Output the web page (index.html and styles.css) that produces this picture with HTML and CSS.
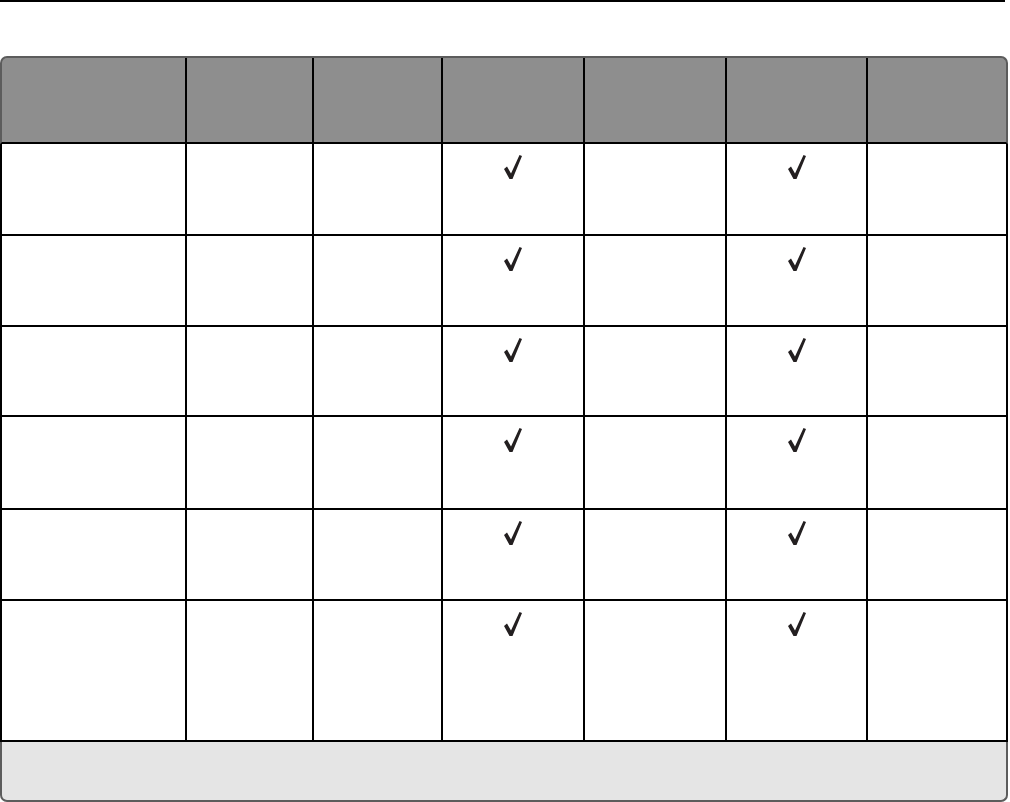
FILE: index.html
```html
<!DOCTYPE html>
<html lang="en">
<head>
<meta charset="utf-8">
<title>Table</title>
<link rel="stylesheet" href="styles.css">
</head>
<body>
<div class="rule"></div>
<div class="table">
  <div class="row head">
    <div class="cell"></div><div class="cell"></div><div class="cell"></div><div class="cell"></div><div class="cell"></div><div class="cell"></div><div class="cell"></div>
  </div>
  <div class="row r1">
    <div class="cell"></div><div class="cell"></div><div class="cell"></div>
    <div class="cell chk"><svg class="tick" viewBox="0 0 20 26" width="20" height="26"><polygon points="1,15 4,12.5 8,19.5 16.5,1 19,2 9.5,25 6.5,25"/></svg></div>
    <div class="cell"></div>
    <div class="cell chk"><svg class="tick" viewBox="0 0 20 26" width="20" height="26"><polygon points="1,15 4,12.5 8,19.5 16.5,1 19,2 9.5,25 6.5,25"/></svg></div>
    <div class="cell"></div>
  </div>
  <div class="row r2">
    <div class="cell"></div><div class="cell"></div><div class="cell"></div>
    <div class="cell chk"><svg class="tick" viewBox="0 0 20 26" width="20" height="26"><polygon points="1,15 4,12.5 8,19.5 16.5,1 19,2 9.5,25 6.5,25"/></svg></div>
    <div class="cell"></div>
    <div class="cell chk"><svg class="tick" viewBox="0 0 20 26" width="20" height="26"><polygon points="1,15 4,12.5 8,19.5 16.5,1 19,2 9.5,25 6.5,25"/></svg></div>
    <div class="cell"></div>
  </div>
  <div class="row r3">
    <div class="cell"></div><div class="cell"></div><div class="cell"></div>
    <div class="cell chk"><svg class="tick" viewBox="0 0 20 26" width="20" height="26"><polygon points="1,15 4,12.5 8,19.5 16.5,1 19,2 9.5,25 6.5,25"/></svg></div>
    <div class="cell"></div>
    <div class="cell chk"><svg class="tick" viewBox="0 0 20 26" width="20" height="26"><polygon points="1,15 4,12.5 8,19.5 16.5,1 19,2 9.5,25 6.5,25"/></svg></div>
    <div class="cell"></div>
  </div>
  <div class="row r4">
    <div class="cell"></div><div class="cell"></div><div class="cell"></div>
    <div class="cell chk"><svg class="tick" viewBox="0 0 20 26" width="20" height="26"><polygon points="1,15 4,12.5 8,19.5 16.5,1 19,2 9.5,25 6.5,25"/></svg></div>
    <div class="cell"></div>
    <div class="cell chk"><svg class="tick" viewBox="0 0 20 26" width="20" height="26"><polygon points="1,15 4,12.5 8,19.5 16.5,1 19,2 9.5,25 6.5,25"/></svg></div>
    <div class="cell"></div>
  </div>
  <div class="row r5">
    <div class="cell"></div><div class="cell"></div><div class="cell"></div>
    <div class="cell chk"><svg class="tick" viewBox="0 0 20 26" width="20" height="26"><polygon points="1,15 4,12.5 8,19.5 16.5,1 19,2 9.5,25 6.5,25"/></svg></div>
    <div class="cell"></div>
    <div class="cell chk"><svg class="tick" viewBox="0 0 20 26" width="20" height="26"><polygon points="1,15 4,12.5 8,19.5 16.5,1 19,2 9.5,25 6.5,25"/></svg></div>
    <div class="cell"></div>
  </div>
  <div class="row r6">
    <div class="cell"></div><div class="cell"></div><div class="cell"></div>
    <div class="cell chk"><svg class="tick" viewBox="0 0 20 26" width="20" height="26"><polygon points="1,15 4,12.5 8,19.5 16.5,1 19,2 9.5,25 6.5,25"/></svg></div>
    <div class="cell"></div>
    <div class="cell chk"><svg class="tick" viewBox="0 0 20 26" width="20" height="26"><polygon points="1,15 4,12.5 8,19.5 16.5,1 19,2 9.5,25 6.5,25"/></svg></div>
    <div class="cell"></div>
  </div>
  <div class="foot"></div>
</div>
</body>
</html>
```

FILE: styles.css
```css
html, body {
  margin: 0;
  padding: 0;
  background: #fff;
  font-family: "Liberation Sans", Arial, sans-serif;
}

.rule {
  width: 1005px;
  height: 2px;
  background: #000;
}

.table {
  width: 1008px;
  margin-top: 54px;
  display: flex;
  flex-direction: column;
}

.row {
  display: grid;
  grid-template-columns: 185px 127px 129px 142px 142px 141px 138px;
  border-left: 2px solid #000;
  border-right: 2px solid #000;
  border-bottom: 2px solid #000;
}

.cell {
  border-right: 2px solid #000;
}

.cell:last-child {
  border-right: none;
}

.head {
  height: 84px;
  background: #8e8e8e;
  border-top: 2px solid #5c5c5c;
  border-left-color: #5c5c5c;
  border-right-color: #5c5c5c;
  border-radius: 7px 7px 0 0;
}

.r1 { height: 90px; }
.r2 { height: 89px; }
.r3 { height: 88px; }
.r4 { height: 91px; }
.r5 { height: 89px; }
.r6 { height: 139px; }

.chk {
  display: flex;
  justify-content: center;
  align-items: flex-start;
  padding-top: 10px;
}

.tick {
  display: block;
  fill: #231f20;
}

.foot {
  height: 58px;
  background: #e5e5e5;
  border: 2px solid #5c5c5c;
  border-top: none;
  border-radius: 0 0 7px 7px;
}
```
